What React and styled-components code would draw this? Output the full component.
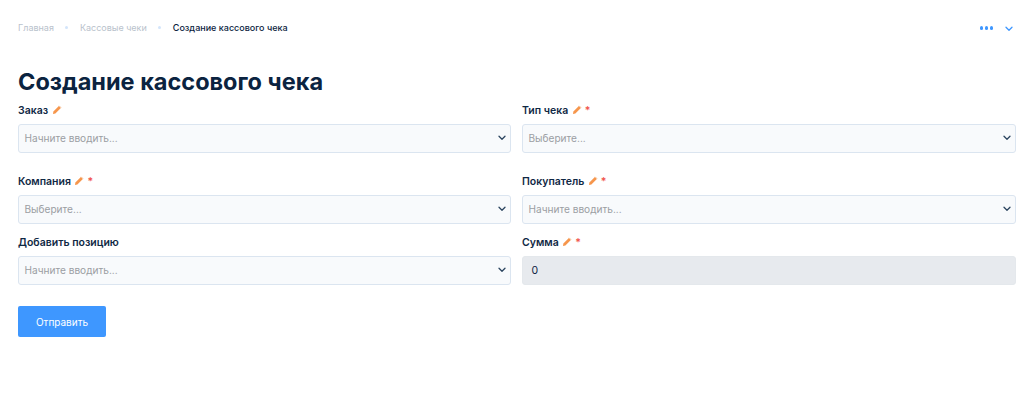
import React from "react";
import styled, { createGlobalStyle } from "styled-components";

const GlobalStyle = createGlobalStyle`
  html, body {
    margin: 0;
    padding: 0;
    background: #fff;
    font-family: Inter, "Noto Sans", sans-serif;
  }
  * { box-sizing: border-box; }
`;

const Page = styled.div`
  width: 1024px;
  height: 403px;
  padding: 0 8px 0 18px;
  overflow: hidden;
`;

const TopBar = styled.div`
  height: 56px;
  display: flex;
  align-items: center;
  justify-content: space-between;
`;

const Crumbs = styled.nav`
  display: flex;
  align-items: center;
  margin-top: -1px;
  font-size: 9px;
  color: #b9c2cc;
`;

const CrumbDot = styled.span`
  width: 3px;
  height: 3px;
  border-radius: 50%;
  background: #d3e5fb;
  margin: 0 12px 0 11px;
`;

const CurrentCrumb = styled.span`
  color: #0b2340;
  font-weight: 500;
`;

const TopActions = styled.div`
  display: flex;
  align-items: center;
  gap: 12px;
  margin-top: 2px;
  padding-right: 3px;
`;

const Dots = styled.div`
  display: flex;
  gap: 1.5px;
  margin-top: -2px;
`;

const Dot = styled.span`
  width: 3.5px;
  height: 3.5px;
  border-radius: 50%;
  background: #3e97ff;
`;

const Title = styled.h1`
  margin: 5px 0 1px;
  height: 40px;
  display: flex;
  align-items: center;
  font-size: 23.5px;
  font-weight: 700;
  color: #0b2340;
`;

const Row = styled.div`
  display: grid;
  grid-template-columns: 493px 494px;
  column-gap: 11px;
  margin-bottom: ${(props) => props.$gap}px;
`;

const Field = styled.div`
  display: flex;
  flex-direction: column;
`;

const Label = styled.label`
  height: 21px;
  margin-top: -1px;
  display: flex;
  align-items: center;
  gap: 3.5px;
  font-size: 10.5px;
  font-weight: 600;
  color: #0f2844;
  padding-bottom: 3px;
`;

const Required = styled.span`
  color: #f1554c;
  font-weight: 600;
  margin-left: -0.5px;
`;

const InputBox = styled.div`
  height: 29px;
  margin-top: 2px;
  display: flex;
  align-items: center;
  justify-content: space-between;
  padding: 0 4px 1px 5.5px;
  border: 1px solid ${(props) => (props.$disabled ? "#e4e8ec" : "#dbe5f0")};
  border-radius: 3px;
  background: ${(props) => (props.$disabled ? "#e7eaee" : "#f8fafc")};
  font-size: 10.1px;
  color: ${(props) => (props.$disabled ? "#0b2340" : "#9b9ea3")};
`;

const Value = styled.span`
  padding-left: 3px;
  font-size: 10.5px;
`;

const Submit = styled.button`
  display: block;
  width: 88px;
  height: 31px;
  margin-top: 21px;
  border: none;
  border-radius: 2px;
  background: #3e97ff;
  color: #fff;
  font-family: inherit;
  font-size: 10px;
`;

const Pencil = () => (
  <svg width="10" height="10" viewBox="0 0 10 10">
    <path d="M6.9 1.1 L8.9 3.1 L3.4 8.6 L1 9 L1.4 6.6 Z" fill="#f6964c" />
    <path d="M7.2 0.8 L9.2 2.8" stroke="#f3b98a" strokeWidth="0.8" />
  </svg>
);

const Chevron = ({ color = "#2c4560" }) => (
  <svg width="8" height="6" viewBox="0 0 8 6" fill="none">
    <path
      d="M1 1.3 L4 4.3 L7 1.3"
      stroke={color}
      strokeWidth="1.3"
      strokeLinecap="round"
      strokeLinejoin="round"
    />
  </svg>
);

const FormField = ({ label, edit, required, placeholder }) => (
  <Field>
    <Label>
      {label}
      {edit && <Pencil />}
      {required && <Required>*</Required>}
    </Label>
    <InputBox>
      {placeholder}
      <Chevron />
    </InputBox>
  </Field>
);

const App = () => {
  return (
    <Page>
      <GlobalStyle />
      <TopBar>
        <Crumbs>
          <span>Главная</span>
          <CrumbDot />
          <span>Кассовые чеки</span>
          <CrumbDot />
          <CurrentCrumb>Создание кассового чека</CurrentCrumb>
        </Crumbs>
        <TopActions>
          <Dots>
            <Dot />
            <Dot />
            <Dot />
          </Dots>
          <Chevron color="#3e97ff" />
        </TopActions>
      </TopBar>
      <Title>Создание кассового чека</Title>
      <Row $gap={20}>
        <FormField label="Заказ" edit placeholder="Начните вводить..." />
        <FormField label="Тип чека" edit required placeholder="Выберите..." />
      </Row>
      <Row $gap={10}>
        <FormField label="Компания" edit required placeholder="Выберите..." />
        <FormField label="Покупатель" edit required placeholder="Начните вводить..." />
      </Row>
      <Row $gap={0}>
        <FormField label="Добавить позицию" placeholder="Начните вводить..." />
        <Field>
          <Label>
            Сумма
            <Pencil />
            <Required>*</Required>
          </Label>
          <InputBox $disabled>
            <Value>0</Value>
          </InputBox>
        </Field>
      </Row>
      <Submit>Отправить</Submit>
    </Page>
  );
};

export default App;
